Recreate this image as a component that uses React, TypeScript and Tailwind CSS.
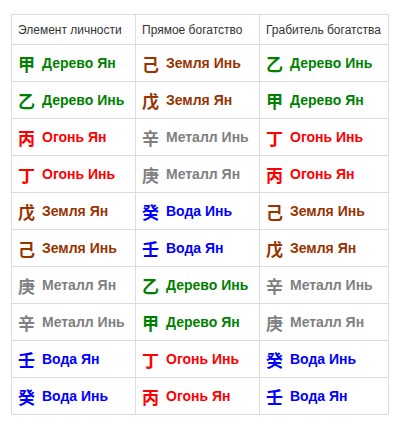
import React from 'react';

type Cell = [string, string, string];

const colors: Record<string, string> = {
  wood: 'text-[#008000]',
  fire: 'text-[#ff0000]',
  earth: 'text-[#993300]',
  metal: 'text-[#808080]',
  water: 'text-[#0000ff]',
};

const stems: Record<string, { label: string; el: string }> = {
  '甲': { label: 'Дерево Ян', el: 'wood' },
  '乙': { label: 'Дерево Инь', el: 'wood' },
  '丙': { label: 'Огонь Ян', el: 'fire' },
  '丁': { label: 'Огонь Инь', el: 'fire' },
  '戊': { label: 'Земля Ян', el: 'earth' },
  '己': { label: 'Земля Инь', el: 'earth' },
  '庚': { label: 'Металл Ян', el: 'metal' },
  '辛': { label: 'Металл Инь', el: 'metal' },
  '壬': { label: 'Вода Ян', el: 'water' },
  '癸': { label: 'Вода Инь', el: 'water' },
};

const rows: Cell[] = [
  ['甲', '己', '乙'],
  ['乙', '戊', '甲'],
  ['丙', '辛', '丁'],
  ['丁', '庚', '丙'],
  ['戊', '癸', '己'],
  ['己', '壬', '戊'],
  ['庚', '乙', '辛'],
  ['辛', '甲', '庚'],
  ['壬', '丁', '癸'],
  ['癸', '丙', '壬'],
];

const Stem: React.FC<{ ch: string }> = ({ ch }) => {
  const s = stems[ch];
  return (
    <span className={`flex items-center font-bold ${colors[s.el]}`}>
      <span className="text-[17px] font-bold leading-none mr-[7px] [font-family:'Noto_Sans_CJK_SC',sans-serif]">{ch}</span>
      <span className="text-[14px]">{s.label}</span>
    </span>
  );
};

export default function App() {
  return (
    <div className="w-[400px] h-[427px] bg-white pt-[14px] pl-[11px] [font-family:'Liberation_Sans',Arial,sans-serif]">
      <table className="border-collapse table-fixed w-[377px]">
        <colgroup>
          <col className="w-[124px]" />
          <col className="w-[124px]" />
          <col className="w-[129px]" />
        </colgroup>
        <thead>
          <tr className="h-[30px]">
            {['Элемент личности', 'Прямое богатство', 'Грабитель богатства'].map((h) => (
              <th key={h} className="border border-[#dddddd] px-[6px] text-left font-normal text-[12px] text-[#333333]">
                {h}
              </th>
            ))}
          </tr>
        </thead>
        <tbody>
          {rows.map((r, i) => (
            <tr key={i} className="h-[37px]">
              {r.map((ch, j) => (
                <td key={j} className="border border-[#dddddd] px-[6px]">
                  <Stem ch={ch} />
                </td>
              ))}
            </tr>
          ))}
        </tbody>
      </table>
    </div>
  );
}
